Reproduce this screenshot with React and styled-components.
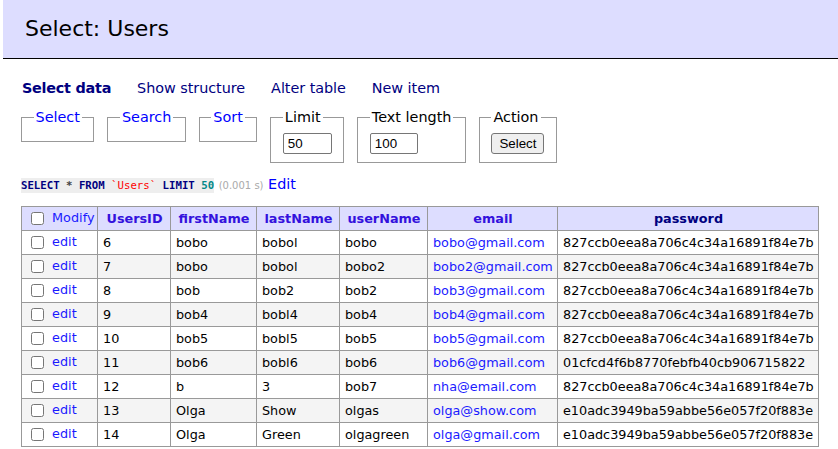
import React from 'react';
import styled, { createGlobalStyle } from 'styled-components';

const GlobalStyle = createGlobalStyle`
  body {
    margin: 0;
    background: #fff;
    color: #000;
    font-family: "DejaVu Sans", Verdana, sans-serif;
    font-size: 14.4px;
    line-height: 18px;
  }
`;

const Title = styled.h2`
  margin: 0 0 0 3px;
  height: 58px;
  padding: 0 22px;
  display: flex;
  align-items: center;
  background: #ddf;
  border-bottom: 1px solid #000;
  font-size: 22px;
  font-weight: normal;
`;

const Content = styled.div`
  padding: 20px 0 0 21px;
`;

const Links = styled.nav`
  display: flex;
  gap: 26px;
  padding-left: 1px;
`;

const NavLink = styled.a`
  color: navy;
  text-decoration: none;
  font-weight: ${p => (p.$current ? 'bold' : 'normal')};
  letter-spacing: ${p => (p.$current ? '-0.25px' : '-0.05px')};
`;

const Controls = styled.form`
  display: flex;
  align-items: flex-start;
  gap: 13px;
  margin: 11px 0 0;
`;

const Fieldset = styled.fieldset`
  margin: 0;
  padding: 7px 11.5px 8px;
  border: 1px solid #999;
  min-width: 0;
`;

const Legend = styled.legend`
  padding: 0 2px;
  line-height: 18px;
  color: #000;
`;

const LegendLink = styled.a`
  color: #00f;
  text-decoration: none;
`;

const SmallInput = styled.input`
  box-sizing: border-box;
  display: block;
  width: ${p => p.$w}px;
  height: 21px;
  margin: 0;
  padding: 1px 4px;
  border: 1px solid #767676;
  border-radius: 2px;
  font: 13.33px "Liberation Sans", Arial, sans-serif;
  color: #000;
`;

const Button = styled.button`
  box-sizing: border-box;
  display: block;
  height: 21px;
  margin: 0;
  padding: 0 7px;
  border: 1px solid #767676;
  border-radius: 3px;
  background: #efefef;
  font: 13.33px "Liberation Sans", Arial, sans-serif;
  color: #000;
`;

const Query = styled.p`
  margin: 12px 0 0;
  line-height: 18px;
`;

const Code = styled.code`
  font-family: "DejaVu Sans Mono", monospace;
  font-size: 10.7px;
  background: #eee;
  padding: 1px 0;
`;

const Tok = styled.span`
  color: ${p => p.$c || '#000'};
  font-weight: ${p => (p.$bold ? 'bold' : 'normal')};
`;

const Time = styled.span`
  font-size: 10px;
  color: #aaa;
`;

const EditLink = styled.a`
  color: #00f;
  text-decoration: none;
`;

const Table = styled.table`
  margin-top: 11px;
  border-collapse: collapse;
  table-layout: fixed;
  width: 798px;
  font-size: 12.8px;
  line-height: 16px;
`;

const Row = styled.tr`
  background: #fff;
  &:nth-child(even) {
    background: #f4f4f4;
  }
`;

const HeadRow = styled.tr`
  background: #ddf;
`;

const Th = styled.th`
  height: 23px;
  padding: 0 4px 0 5px;
  border: 1px solid #999;
  text-align: center;
  white-space: nowrap;
  overflow: hidden;
`;

const Td = styled.td`
  height: 23px;
  padding: 0 4px 0 5px;
  border: 1px solid #999;
  text-align: left;
  white-space: nowrap;
`;

const HeadLink = styled.a`
  color: ${p => (p.$navy ? 'navy' : '#3311dd')};
  font-weight: bold;
  text-decoration: none;
`;

const CellLink = styled.a`
  color: #1a1aff;
  text-decoration: none;
`;

const Check = styled.input`
  margin: 3px 4px 3px 4px;
  vertical-align: -3px;
`;

const columns = [76, 73, 86, 83, 88, 130, 261];
const heads = ['UsersID', 'firstName', 'lastName', 'userName', 'email', 'password'];

const users = [
  [6, 'bobo', 'bobol', 'bobo', 'bobo@gmail.com', '827ccb0eea8a706c4c34a16891f84e7b'],
  [7, 'bobo', 'bobol', 'bobo2', 'bobo2@gmail.com', '827ccb0eea8a706c4c34a16891f84e7b'],
  [8, 'bob', 'bob2', 'bob2', 'bob3@gmail.com', '827ccb0eea8a706c4c34a16891f84e7b'],
  [9, 'bob4', 'bobl4', 'bob4', 'bob4@gmail.com', '827ccb0eea8a706c4c34a16891f84e7b'],
  [10, 'bob5', 'bobl5', 'bob5', 'bob5@gmail.com', '827ccb0eea8a706c4c34a16891f84e7b'],
  [11, 'bob6', 'bobl6', 'bob6', 'bob6@gmail.com', '01cfcd4f6b8770febfb40cb906715822'],
  [12, 'b', '3', 'bob7', 'nha@email.com', '827ccb0eea8a706c4c34a16891f84e7b'],
  [13, 'Olga', 'Show', 'olgas', 'olga@show.com', 'e10adc3949ba59abbe56e057f20f883e'],
  [14, 'Olga', 'Green', 'olgagreen', 'olga@gmail.com', 'e10adc3949ba59abbe56e057f20f883e'],
];

export default function App() {
  return (
    <>
      <GlobalStyle />
      <Title>Select: Users</Title>
      <Content>
        <Links>
          <NavLink $current>Select data</NavLink>
          <NavLink href="#">Show structure</NavLink>
          <NavLink href="#">Alter table</NavLink>
          <NavLink href="#">New item</NavLink>
        </Links>

        <Controls onSubmit={e => e.preventDefault()}>
          <Fieldset><Legend><LegendLink href="#">Select</LegendLink></Legend></Fieldset>
          <Fieldset><Legend><LegendLink href="#">Search</LegendLink></Legend></Fieldset>
          <Fieldset><Legend><LegendLink href="#">Sort</LegendLink></Legend></Fieldset>
          <Fieldset>
            <Legend>Limit</Legend>
            <SmallInput $w={49} defaultValue="50" />
          </Fieldset>
          <Fieldset>
            <Legend>Text length</Legend>
            <SmallInput $w={48} defaultValue="100" />
          </Fieldset>
          <Fieldset>
            <Legend>Action</Legend>
            <Button type="submit">Select</Button>
          </Fieldset>
        </Controls>

        <Query>
          <Code>
            <Tok $c="navy" $bold>SELECT</Tok> <Tok $c="#444" $bold>*</Tok>{' '}
            <Tok $c="navy" $bold>FROM</Tok> <Tok $c="#f00">`Users`</Tok>{' '}
            <Tok $c="navy" $bold>LIMIT</Tok> <Tok $c="#088" $bold>50</Tok>
          </Code>{' '}
          <Time>(0.001 s)</Time> <EditLink href="#">Edit</EditLink>
        </Query>

        <Table>
          <colgroup>
            {columns.map((w, i) => <col key={i} style={{ width: w }} />)}
          </colgroup>
          <thead>
            <HeadRow>
              <Td>
                <Check type="checkbox" /> <CellLink href="#">Modify</CellLink>
              </Td>
              {heads.map(h => (
                <Th key={h}>
                  <HeadLink href="#" $navy={h === 'password'}>{h}</HeadLink>
                </Th>
              ))}
            </HeadRow>
          </thead>
          <tbody>
            {users.map(u => (
              <Row key={u[0]}>
                <Td>
                  <Check type="checkbox" /> <CellLink href="#">edit</CellLink>
                </Td>
                <Td>{u[0]}</Td>
                <Td>{u[1]}</Td>
                <Td>{u[2]}</Td>
                <Td>{u[3]}</Td>
                <Td><CellLink href="#">{u[4]}</CellLink></Td>
                <Td>{u[5]}</Td>
              </Row>
            ))}
          </tbody>
        </Table>
      </Content>
    </>
  );
}
